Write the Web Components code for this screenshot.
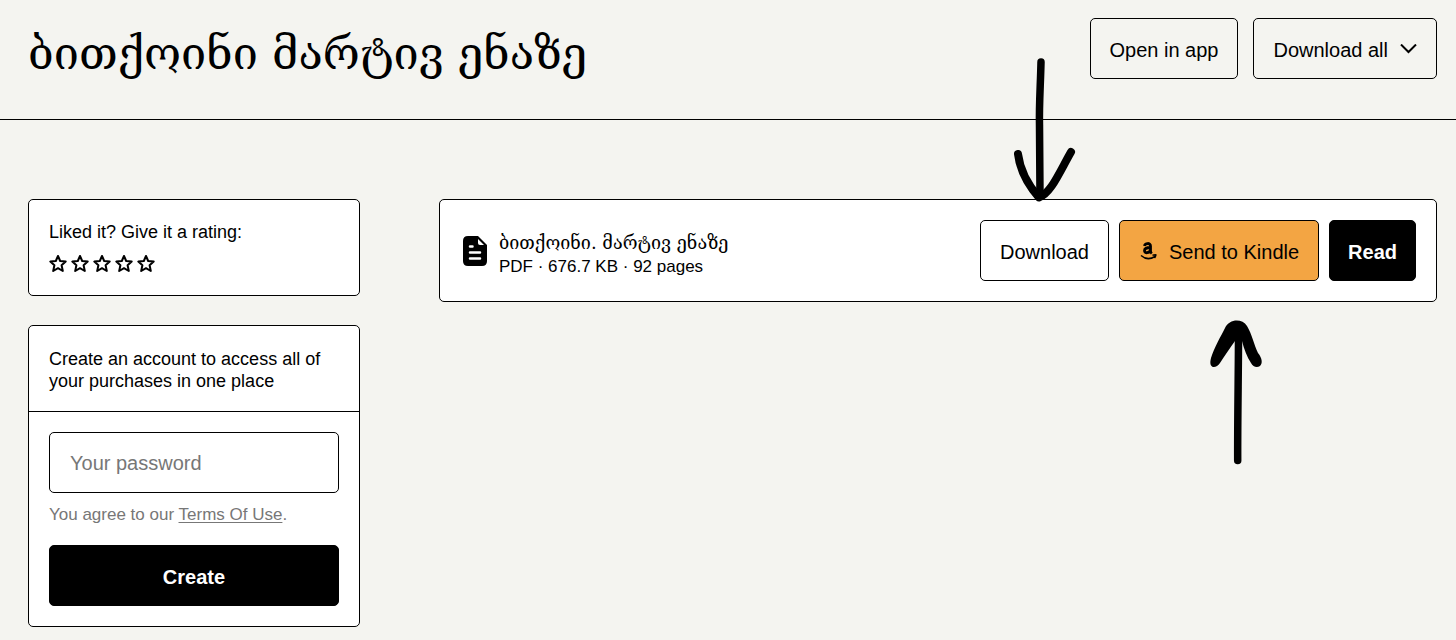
<!DOCTYPE html>
<html lang="en">
<head>
<meta charset="utf-8">
<meta name="viewport" content="width=device-width, initial-scale=1">
<title>ბითქოინი მარტივ ენაზე</title>
<style>
  body {
    margin: 0;
    background: #f4f4f0;
    color: #000;
    font: 17px/22px "Liberation Sans", "DejaVu Sans", sans-serif;
    --georgian: "DejaVu Serif", serif;
    --radius: 5px;
    --accent: #f3a543;
  }
</style>
</head>
<body>
<library-page></library-page>

<script>
const define = (name, html, setup) => {
  const template = document.createElement('template');
  template.innerHTML = html;
  customElements.define(name, class extends HTMLElement {
    constructor() {
      super();
      this.attachShadow({ mode: 'open' }).append(template.content.cloneNode(true));
      if (setup) setup(this.shadowRoot);
    }
  });
};

define('ui-button', `
  <style>
    :host { display: block; }
    button {
      box-sizing: border-box; width: 100%; height: 61px; margin: 0; padding: 2px 19px 0;
      display: flex; align-items: center; justify-content: center; gap: 12px;
      border: 1px solid #000; border-radius: var(--radius);
      background: transparent; color: inherit; font: inherit;
      font-size: 20px; line-height: 28px; white-space: nowrap; cursor: pointer;
    }
    :host([variant="accent"]) button { background: var(--accent); }
    :host([variant="primary"]) button { background: #000; color: #fff; font-weight: bold; padding: 2px 18px 0; }
  </style>
  <button type="button"><slot name="before"></slot><slot></slot><slot name="after"></slot></button>
`);

define('ui-card', `
  <style>
    :host { display: block; border: 1px solid #000; border-radius: var(--radius); background: #fff; }
  </style>
  <slot></slot>
`);

define('page-header', `
  <style>
    :host { display: block; border-bottom: 1px solid #000; }
    header { display: flex; justify-content: space-between; align-items: flex-start; gap: 24px; padding: 18px 19px 35px 28px; }
    h1 { margin: 0; padding-top: 6px; font: 45px/60px var(--georgian); }
    .actions { display: flex; flex: none; gap: 15px; }
    svg { display: block; }
  </style>
  <header>
    <h1><slot></slot></h1>
    <div class="actions">
      <ui-button>Open in app</ui-button>
      <ui-button>Download all
        <svg slot="after" width="17" height="12" viewBox="0 0 17 12" fill="none" stroke="#000" stroke-width="2" aria-hidden="true"><path d="M1 .5 8.5 8 16 .5"/></svg>
      </ui-button>
    </div>
  </header>
`);

define('star-rating', `
  <style>
    :host { display: block; font-size: 18px; }
    fieldset { margin: 0; padding: 21px 20px 20px; border: 0; }
    legend { float: left; width: 100%; padding: 0; }
    .stars { clear: both; display: flex; gap: 4px; padding-top: 12px; }
    label { display: block; position: relative; width: 18px; height: 20px; cursor: pointer; }
    input { position: absolute; inset: 0; margin: 0; appearance: none; width: 100%; height: 100%; }
    svg { display: block; fill: none; stroke: #000; stroke-width: 2; stroke-linejoin: round; }
  </style>
  <fieldset>
    <legend>Liked it? Give it a rating:</legend>
    <div class="stars"></div>
  </fieldset>
`, root => {
  root.querySelector('.stars').innerHTML = [1, 2, 3, 4, 5].map(n => `
    <label><input type="radio" name="rating" value="${n}" aria-label="${n} of 5">
      <svg width="18" height="20" viewBox="0 0 18 20" aria-hidden="true"><path d="M9 1 11.2 6 16.7 6.6 12.6 10.3 13.8 16 9 13.2 4.2 16 5.4 10.3 1.3 6.6 6.8 6Z"/></svg>
    </label>`).join('');
});

define('account-form', `
  <style>
    :host { display: block; }
    p { margin: 0; }
    .intro { padding: 22px 20px 19px; border-bottom: 1px solid #000; font-size: 18px; }
    form { display: flex; flex-direction: column; padding: 20px; }
    input {
      box-sizing: border-box; width: 100%; height: 61px; margin: 0; padding: 2px 20px 0;
      border: 1px solid #000; border-radius: var(--radius); background: #fff;
      color: inherit; font: inherit; font-size: 20px;
    }
    input::placeholder { color: #777; opacity: 1; }
    .terms { margin: 10px 0 19px; color: #777; line-height: 23px; }
    a { color: inherit; text-underline-offset: 2px; text-decoration-thickness: 1px; }
  </style>
  <p class="intro">Create an account to access all of your purchases in one place</p>
  <form>
    <input type="password" placeholder="Your password" aria-label="Your password">
    <p class="terms">You agree to our <a href="#terms">Terms Of Use</a>.</p>
    <ui-button variant="primary">Create</ui-button>
  </form>
`);

define('arrow-down', `
  <style>:host { display: block; pointer-events: none; } svg { display: block; }</style>
  <svg width="70" height="150" viewBox="1010 55 70 150" fill="none" stroke="#000" stroke-linecap="round" stroke-linejoin="round" aria-hidden="true">
    <path stroke-width="7.5" d="M1041 62C1040.500 85 1039 105 1039.500 125 1039.500 150 1040 175 1040 196"/>
    <path stroke-width="8" d="M1018 154C1020 170 1028 185 1039 197.500 1051 193 1059 173 1071 152"/>
  </svg>
`);

define('arrow-up', `
  <style>:host { display: block; pointer-events: none; } svg { display: block; }</style>
  <svg width="65" height="155" viewBox="1205 315 65 155" aria-hidden="true">
    <path fill="none" stroke="#000" stroke-width="7.500" stroke-linecap="round" d="M1238.500 335C1238.500 370 1237.500 420 1237.700 460.500"/>
    <path d="M1211 358C1214 348 1221 336 1225 328 1229 319 1242 318 1247 326 1252 334 1254 345 1258 353 1262 358 1263 363 1260 366 1257 368 1253 367 1251 363 1247 357 1244 349 1242 341L1235 341C1230 348 1225 355 1220 363 1216 369 1208 369 1211 358Z"/>
  </svg>
`);

define('file-row', `
  <style>
    :host { display: block; }
    .row { display: flex; align-items: center; gap: 12px; padding: 20px 20px 20px 23px; }
    .icon { flex: none; display: block; }
    .info { flex: 1; min-width: 0; padding-top: 8px; }
    h2 { margin: 0; font: 18px/25px var(--georgian); }
    p { margin: 0; line-height: 24px; }
    .actions { position: relative; display: flex; flex: none; gap: 10px; }
    svg { display: block; }
    arrow-down { position: absolute; right: 336px; bottom: 76px; }
    arrow-up { position: absolute; right: 146px; top: 95px; }
  </style>
  <div class="row">
    <svg class="icon" width="24" height="30" viewBox="0 0 24 30" aria-hidden="true">
      <path d="M5 0H15L24 9V25Q24 30 19 30H5Q0 30 0 25V5Q0 0 5 0Z"/>
      <path fill="#fff" d="M15 3V7Q15 9 17 9H21Z"/>
      <path fill="none" stroke="#fff" stroke-width="2.500" stroke-linecap="round" d="M7 10.500H9.500M7 16.500H17M7 22.500H17"/>
    </svg>
    <div class="info">
      <h2><slot></slot></h2>
      <p><slot name="meta"></slot></p>
    </div>
    <div class="actions">
      <ui-button>Download</ui-button>
      <ui-button variant="accent">
        <svg slot="before" width="18" height="20" viewBox="0 0 18 20" fill="none" stroke="#000" aria-hidden="true">
          <path stroke-width="2.800" d="M5.500 4C6 .8 11.500 .6 11.500 4V9Q11.500 10.500 12.800 11.500M11.500 5.500C7.500 5.500 5.500 6.500 5.500 8.700 5.500 11.600 10.500 11.500 11.500 7.800"/>
          <path stroke-width="1.500" d="M2 13.500C6.500 17.500 12 17 16 14.500M13.500 13.200Q17.500 12.300 16.800 13.200 16.600 14.800 15.500 16"/>
        </svg>
        Send to Kindle
      </ui-button>
      <ui-button variant="primary">Read</ui-button>
      <arrow-down></arrow-down>
      <arrow-up></arrow-up>
    </div>
  </div>
`);

define('library-page', `
  <style>
    :host { display: block; }
    main { display: grid; grid-template-columns: 332px minmax(0, 1fr); column-gap: 79px; align-items: start; padding: 79px 19px 13px 28px; }
    aside { display: grid; gap: 29px; }
  </style>
  <page-header>ბითქოინი მარტივ ენაზე</page-header>
  <main>
    <aside>
      <ui-card><star-rating></star-rating></ui-card>
      <ui-card><account-form></account-form></ui-card>
    </aside>
    <ui-card>
      <file-row>ბითქოინი. მარტივ ენაზე<span slot="meta">PDF · 676.7 KB · 92 pages</span></file-row>
    </ui-card>
  </main>
`);
</script>
</body>
</html>
